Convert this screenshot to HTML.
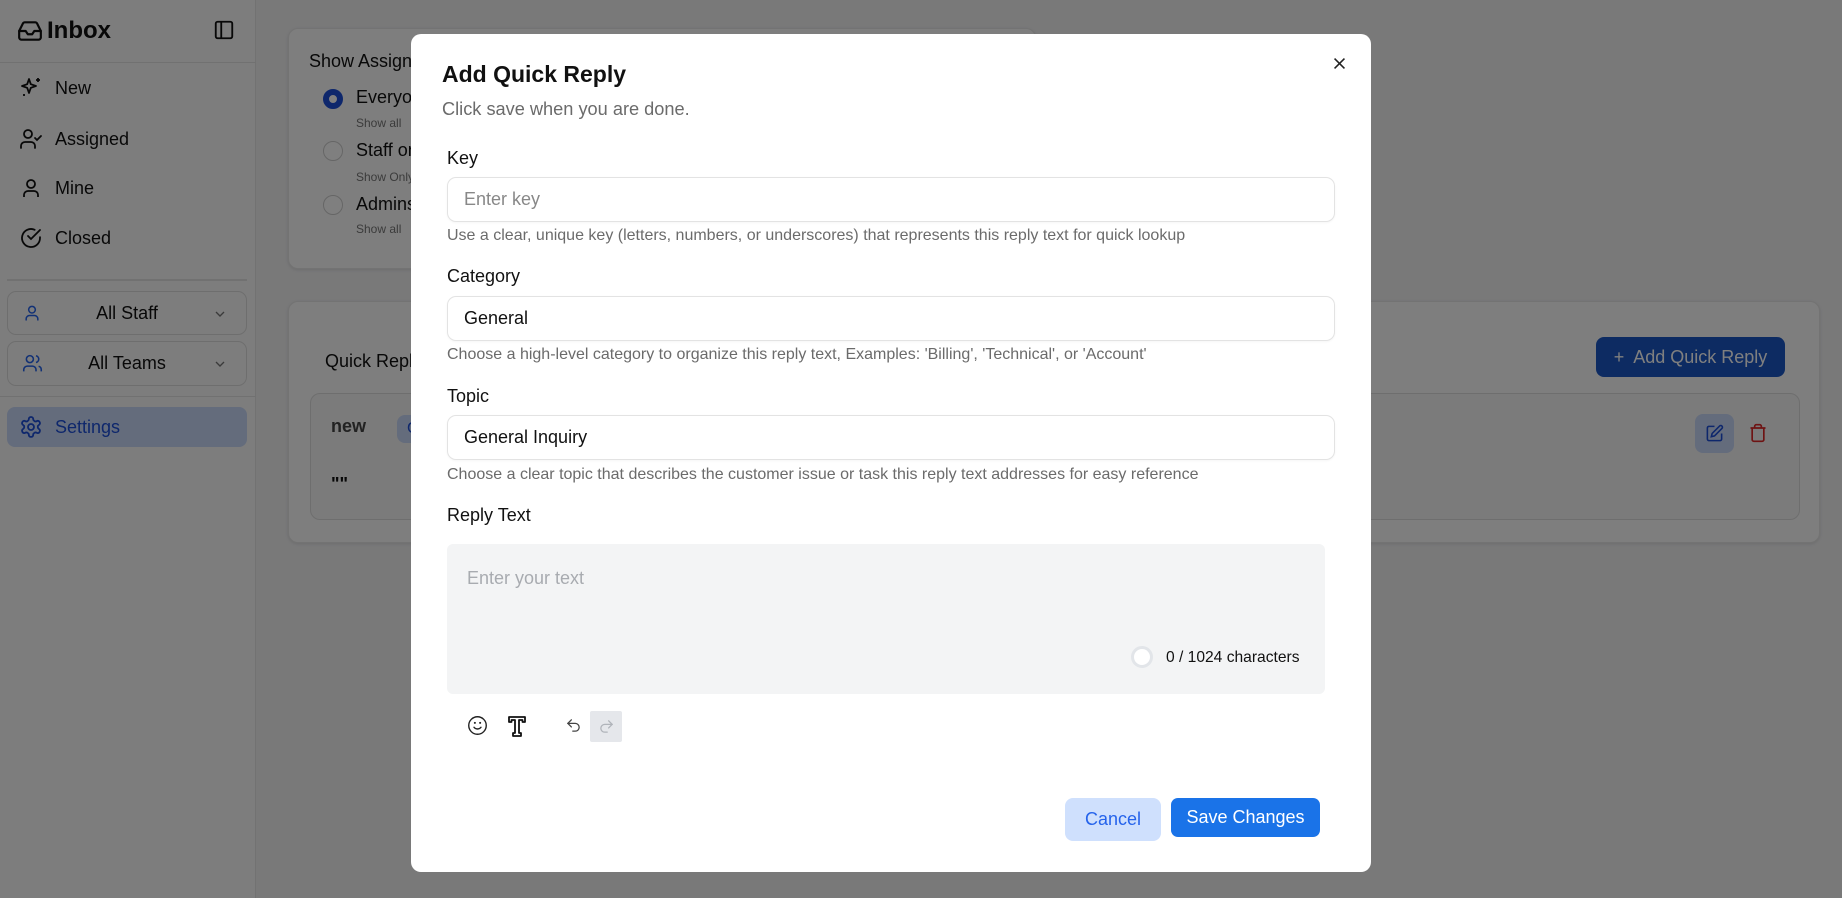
<!DOCTYPE html>
<html><head><meta charset="utf-8"><style>
*{box-sizing:border-box;margin:0;padding:0}
body{width:1842px;height:898px;overflow:hidden;font-family:"Liberation Sans",sans-serif;background:#f2f2f3;position:relative;color:#111}
.abs{position:absolute}
.side{left:0;top:0;width:256px;height:898px;background:#fafafa;border-right:1px solid #e5e5e5}
.nav{position:absolute;left:19px;font-size:18px;display:flex;align-items:center;gap:12px}
.nav svg{width:24px;height:24px}
.card{background:#fcfcfc;border:1px solid #e6e6e6;border-radius:10px;box-shadow:0 1px 3px rgba(0,0,0,.1)}
.overlay{left:0;top:0;width:1842px;height:898px;background:rgba(0,0,0,.5)}
.modal{left:411px;top:34px;width:960px;height:838px;background:#fff;border-radius:10px}
.lbl{position:absolute;left:36px;font-size:18px;color:#111}
.inp{position:absolute;left:36px;width:888px;height:45px;border:1px solid #e3e3e3;border-radius:9px;font-size:18px;padding-left:16px;line-height:43px;box-shadow:0 1px 2px rgba(0,0,0,.04)}
.help{position:absolute;left:36px;font-size:16px;color:#6b6b6b}
</style></head><body>
<div class="abs side">
  <div class="abs" style="left:17px;top:17px;display:flex;align-items:center;gap:4px;font-weight:bold;font-size:24px">
    <svg width="26" height="26" viewBox="0 0 24 24" fill="none" stroke="#111" stroke-width="2" stroke-linecap="round" stroke-linejoin="round"><path d="M22 12h-6l-2 3h-4l-2-3H2"/><path d="M5.45 5.11 2 12v6a2 2 0 0 0 2 2h16a2 2 0 0 0 2-2v-6l-3.45-6.89A2 2 0 0 0 16.76 4H7.24a2 2 0 0 0-1.790 1.11z"/></svg>Inbox</div>
  <svg class="abs" style="left:213px;top:19px" width="22" height="22" viewBox="0 0 24 24" fill="none" stroke="#111" stroke-width="2"><rect x="3" y="3" width="18" height="18" rx="2"/><path d="M9 3v18"/></svg>
  <div class="abs" style="left:0;top:62px;width:256px;border-top:1px solid #e3e3e3"></div>
  <div class="nav" style="top:76px"><svg viewBox="0 0 24 24" fill="none" stroke="#111" stroke-width="1.8" stroke-linejoin="round"><path d="M10 3l1.8 5.2L17 10l-5.2 1.8L10 17l-1.8-5.2L3 10l5.2-1.8z"/><path d="M19 2v4M17 4h4M5 18v2"/></svg>New</div>
  <div class="nav" style="top:127px"><svg viewBox="0 0 24 24" fill="none" stroke="#111" stroke-width="1.8" stroke-linecap="round"><circle cx="9" cy="7" r="4"/><path d="M2 21v-2a4 4 0 0 1 4-4h6a4 4 0 0 1 4 4v2M16 11l2 2 4-4"/></svg>Assigned</div>
  <div class="nav" style="top:176px"><svg viewBox="0 0 24 24" fill="none" stroke="#111" stroke-width="1.8"><circle cx="12" cy="8" r="4"/><path d="M5 21v-2a4 4 0 0 1 4-4h6a4 4 0 0 1 4 4v2"/></svg>Mine</div>
  <div class="nav" style="top:226px"><svg viewBox="0 0 24 24" fill="none" stroke="#111" stroke-width="1.8" stroke-linecap="round"><path d="M21 11.1V12a9 9 0 1 1-5.3-8.2"/><path d="M21 4 12 13l-3-3"/></svg>Closed</div>
  <div class="abs" style="left:7px;top:279px;width:240px;border-top:2px solid #e3e3e3"></div>
  <div class="abs" style="left:7px;top:291px;width:240px;height:44px;border:1px solid #ddd;border-radius:9px;font-size:18px;text-align:center;line-height:42px">All Staff
    <svg class="abs" style="left:14px;top:11px" width="20" height="20" viewBox="0 0 24 24" fill="none" stroke="#2563eb" stroke-width="1.8"><circle cx="12" cy="8" r="4"/><path d="M5 21v-2a4 4 0 0 1 4-4h6a4 4 0 0 1 4 4v2"/></svg>
    <svg class="abs" style="left:204px;top:14px" width="16" height="16" viewBox="0 0 24 24" fill="none" stroke="#777" stroke-width="2"><path d="m6 9 6 6 6-6"/></svg></div>
  <div class="abs" style="left:7px;top:341px;width:240px;height:45px;border:1px solid #ddd;border-radius:9px;font-size:18px;text-align:center;line-height:43px">All Teams
    <svg class="abs" style="left:14px;top:11px" width="21" height="21" viewBox="0 0 24 24" fill="none" stroke="#2563eb" stroke-width="1.8"><circle cx="9" cy="7" r="4"/><path d="M2 21v-2a4 4 0 0 1 4-4h6a4 4 0 0 1 4 4v2M16 3.1a4 4 0 0 1 0 7.8M22 21v-2a4 4 0 0 0-3-3.9"/></svg>
    <svg class="abs" style="left:204px;top:14px" width="16" height="16" viewBox="0 0 24 24" fill="none" stroke="#777" stroke-width="2"><path d="m6 9 6 6 6-6"/></svg></div>
  <div class="abs" style="left:0;top:396px;width:256px;border-top:1px solid #e3e3e3"></div>
  <div class="abs" style="left:7px;top:407px;width:240px;height:40px;background:#c8d8f8;border-radius:8px"></div>
  <div class="nav" style="top:415px;color:#1d4ed8"><svg viewBox="0 0 24 24" fill="none" stroke="#1d4ed8" stroke-width="1.8"><circle cx="12" cy="12" r="3"/><path d="M12.2 2h-.4a2 2 0 0 0-2 2v.2a2 2 0 0 1-1 1.7l-.4.3a2 2 0 0 1-2 0l-.2-.1a2 2 0 0 0-2.7.7l-.2.4a2 2 0 0 0 .7 2.7l.2.1a2 2 0 0 1 1 1.7v.5a2 2 0 0 1-1 1.7l-.2.1a2 2 0 0 0-.7 2.700l.2.4a2 2 0 0 0 2.7.7l.2-.1a2 2 0 0 1 2 0l.4.3a2 2 0 0 1 1 1.7v.2a2 2 0 0 0 2 2h.4a2 2 0 0 0 2-2v-.2a2 2 0 0 1 1-1.7l.4-.3a2 2 0 0 1 2 0l.2.1a2 2 0 0 0 2.7-.7l.2-.4a2 2 0 0 0-.7-2.7l-.2-.1a2 2 0 0 1-1-1.7v-.5a2 2 0 0 1 1-1.7l.2-.1a2 2 0 0 0 .7-2.7l-.2-.4a2 2 0 0 0-2.7-.7l-.2.1a2 2 0 0 1-2 0l-.4-.3a2 2 0 0 1-1-1.7V4a2 2 0 0 0-2-2z"/></svg>Settings</div>
</div>

<div class="abs card" style="left:288px;top:28px;width:748px;height:241px">
  <div class="abs" style="left:20px;top:22px;font-size:18px">Show Assignments</div>
  <div class="abs" style="left:34px;top:60px;width:20px;height:20px;border-radius:50%;border:6px solid #1d4ed8;background:#fff"></div>
  <div class="abs" style="left:67px;top:58px;font-size:18px">Everyone</div><div class="abs" style="left:67px;top:87px;font-size:12px;color:#777">Show all</div>
  <div class="abs" style="left:34px;top:112px;width:20px;height:20px;border-radius:50%;border:1px solid #ccc;background:#fff"></div>
  <div class="abs" style="left:67px;top:111px;font-size:18px">Staff only</div><div class="abs" style="left:67px;top:141px;font-size:12px;color:#777">Show Only</div>
  <div class="abs" style="left:34px;top:166px;width:20px;height:20px;border-radius:50%;border:1px solid #ccc;background:#fff"></div>
  <div class="abs" style="left:67px;top:165px;font-size:18px">Admins</div><div class="abs" style="left:67px;top:193px;font-size:12px;color:#777">Show all</div>
</div>
<div class="abs card" style="left:288px;top:301px;width:1532px;height:242px">
  <div class="abs" style="left:36px;top:49px;font-size:18px">Quick Replies</div>
  <div class="abs" style="left:1307px;top:35px;width:189px;height:40px;background:#1a56c4;border-radius:8px;color:#fff;font-size:18px;line-height:40px;text-align:center">+&nbsp; Add Quick Reply</div>
  <div class="abs" style="left:21px;top:91px;width:1490px;height:127px;border:1px solid #ddd;border-radius:10px;background:#f6f6f6">
    <div class="abs" style="left:20px;top:22px;font-size:18px;color:#444;font-weight:bold">new</div>
    <div class="abs" style="left:86px;top:21px;width:60px;height:28px;background:#c8d8f8;border-radius:8px;color:#1d4ed8;font-size:16px;line-height:28px;padding-left:10px">General</div>
    <div class="abs" style="left:20px;top:80px;font-size:18px;font-weight:bold">""</div>
    <div class="abs" style="left:1384px;top:20px;width:39px;height:39px;background:#c8d8f8;border-radius:8px"></div>
    <svg class="abs" style="left:1394px;top:30px" width="19" height="19" viewBox="0 0 24 24" fill="none" stroke="#1d4ed8" stroke-width="2"><path d="M12 3H5a2 2 0 0 0-2 2v14a2 2 0 0 0 2 2h14a2 2 0 0 0 2-2v-7"/><path d="M18.4 2.6a2.1 2.1 0 1 1 3 3L12 15l-4 1 1-4z"/></svg>
    <svg class="abs" style="left:1437px;top:29px" width="20" height="20" viewBox="0 0 24 24" fill="none" stroke="#dc2626" stroke-width="2"><path d="M3 6h18M19 6v14a2 2 0 0 1-2 2H7a2 2 0 0 1-2-2V6M8 6V4a2 2 0 0 1 2-2h4a2 2 0 0 1 2 2v2"/></svg>
  </div>
</div>

<div class="abs overlay"></div>

<div class="abs modal">
  <div class="abs" style="left:31px;top:27px;font-size:23px;font-weight:bold">Add Quick Reply</div>
  <div class="abs" style="left:31px;top:65px;font-size:18.2px;color:#6b6b6b">Click save when you are done.</div>
  <svg class="abs" style="left:920px;top:21px" width="17" height="17" viewBox="0 0 24 24" fill="none" stroke="#222" stroke-width="2.2"><path d="M5 5l14 14M19 5 5 19"/></svg>
  <div class="lbl" style="top:114px">Key</div>
  <div class="inp" style="top:143px;color:#888">Enter key</div>
  <div class="help" style="top:193px">Use a clear, unique key (letters, numbers, or underscores) that represents this reply text for quick lookup</div>
  <div class="lbl" style="top:232px">Category</div>
  <div class="inp" style="top:262px">General</div>
  <div class="help" style="top:312px">Choose a high-level category to organize this reply text, Examples: 'Billing', 'Technical', or 'Account'</div>
  <div class="lbl" style="top:352px">Topic</div>
  <div class="inp" style="top:381px">General Inquiry</div>
  <div class="help" style="top:432px">Choose a clear topic that describes the customer issue or task this reply text addresses for easy reference</div>
  <div class="lbl" style="top:471px">Reply Text</div>
  <div class="abs" style="left:36px;top:510px;width:878px;height:150px;background:#f3f4f5;border-radius:6px">
    <div class="abs" style="left:20px;top:24px;font-size:18px;color:#a8abb0">Enter your text</div>
    <div class="abs" style="left:684px;top:102px;width:22px;height:22px;border-radius:50%;border:3px solid #e2e5e9;background:#fff"></div>
    <div class="abs" style="left:719px;top:105px;font-size:15.6px;color:#111">0 / 1024 characters</div>
  </div>
  <svg class="abs" style="left:56px;top:681px" width="21" height="21" viewBox="0 0 24 24" fill="none" stroke="#222" stroke-width="1.6" stroke-linecap="round"><circle cx="12" cy="12" r="10"/><path d="M8 14s1.5 2 4 2 4-2 4-2"/><path d="M9 9h.01M15 9h.01" stroke-width="2.4"/></svg>
  <svg class="abs" style="left:96px;top:681px" width="20" height="22" viewBox="0 0 20 22" fill="none" stroke="#111" stroke-width="1.8" stroke-linejoin="round"><path d="M2 2h16v5h-2.5V5H12v13h2v3H6v-3h2V5H4.5v2H2z"/></svg>
  <svg class="abs" style="left:154px;top:683px" width="17" height="17" viewBox="0 0 24 24" fill="none" stroke="#444" stroke-width="1.8" stroke-linecap="round"><path d="M9 14 4 9l5-5"/><path d="M4 9h10.5a5.5 5.5 0 0 1 0 11H11"/></svg>
  <div class="abs" style="left:179px;top:677px;width:32px;height:31px;background:#e5e7eb;border-radius:2px"></div>
  <svg class="abs" style="left:187px;top:684px" width="17" height="17" viewBox="0 0 24 24" fill="none" stroke="#b0b4ba" stroke-width="1.8" stroke-linecap="round"><path d="m15 14 5-5-5-5"/><path d="M20 9H9.5a5.5 5.5 0 0 0 0 11H13"/></svg>
  <div class="abs" style="left:654px;top:764px;width:96px;height:43px;background:#cfe0fd;border-radius:8px;color:#2563eb;font-size:18px;line-height:43px;text-align:center">Cancel</div>
  <div class="abs" style="left:760px;top:764px;width:149px;height:39px;background:#1a73e8;border-radius:7px;color:#fff;font-size:18px;line-height:39px;text-align:center">Save Changes</div>
</div>
</body></html>
